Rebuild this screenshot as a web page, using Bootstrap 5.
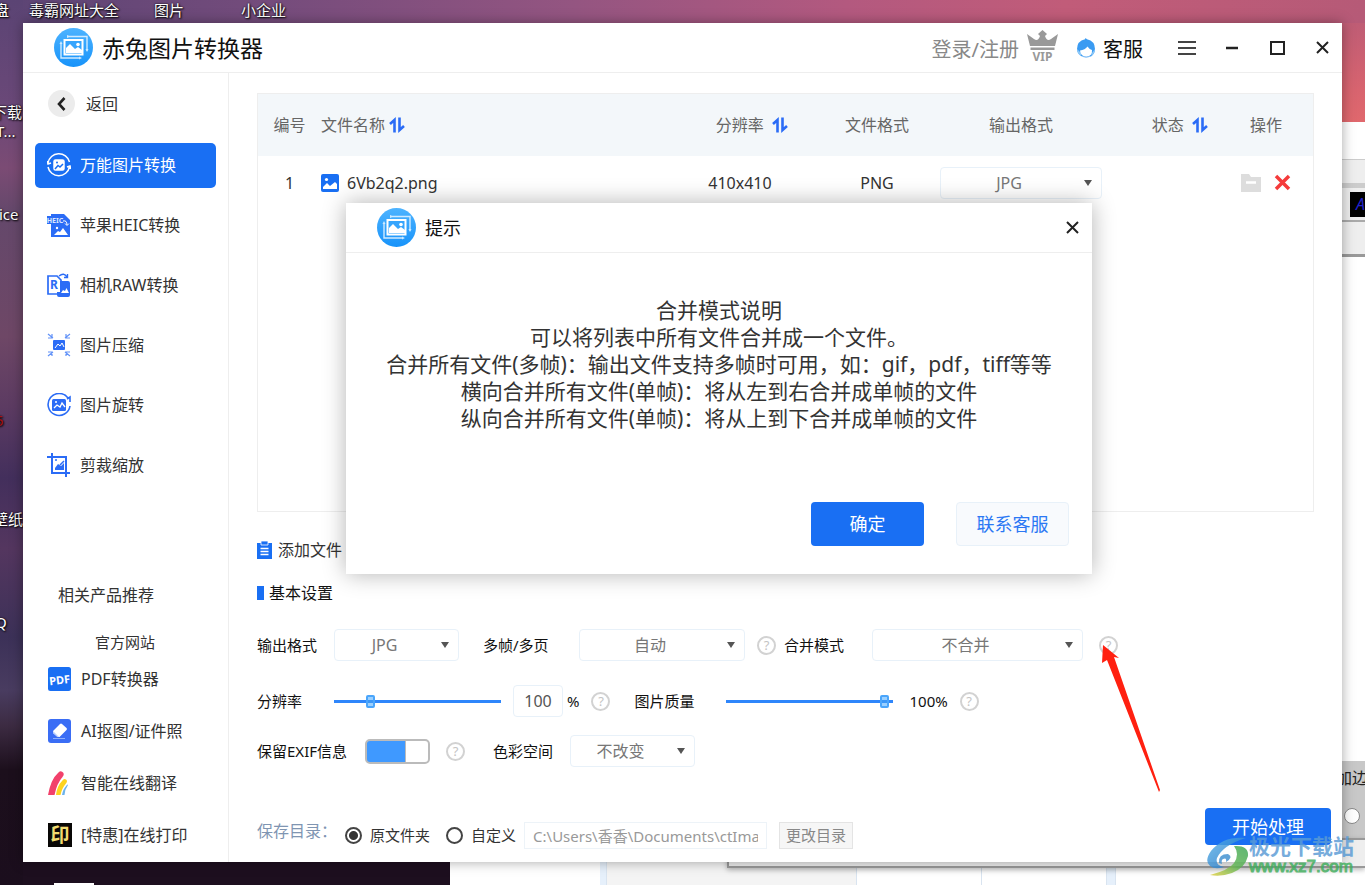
<!DOCTYPE html>
<html lang="zh-CN">
<head>
<meta charset="utf-8">
<meta name="viewport" content="width=device-width, initial-scale=1">
<title>赤兔图片转换器</title>
<link rel="stylesheet" href="https://cdn.jsdelivr.net/npm/bootstrap@5.3.0/dist/css/bootstrap.min.css">
<style>
:root{--blue:#196ff3;--line:#eee;--field:#e8f1f9}
body{font-family:"Noto Sans","Noto Sans CJK SC",sans-serif;font-size:16px;line-height:24px;color:#333;background:#1d0f1f}
button{font-family:inherit}
svg{display:block;flex:none}
a{color:inherit;text-decoration:none}

/* wallpaper */
.desktop{padding:23px;background:
  linear-gradient(180deg,#5b4474 0,#6a4878 12%,#7b4b74 19%,#64486b 24%,#6e4766 38%,#5c3b62 46%,#432f5c 54%,#54365f 62%,#3c3158 72%,#493c60 78%,#3c2b42 82%,#1c0f1c 87%,#1b0e1d 100%) left top/23px 100% no-repeat,
  linear-gradient(90deg,#5b4474 0,#754c7c 20%,#945581 42%,#b3597f 62%,#c15c79 78%,#b65a77 100%) left top/100% 23px no-repeat,
  linear-gradient(180deg,#b65a77 0,#d8646f 90px,#e0686d 122px) right top/23px 130px no-repeat,
  #1d0f1f}
.desk-label{position:absolute;color:#fff;font-size:15px;line-height:20px;white-space:nowrap;text-shadow:1px 1px 2px #000,0 0 2px #000}
.task-mark{position:absolute;left:54px;bottom:0;width:40px;height:2px;background:#fff}
.back-win{position:absolute;top:122px;left:450px;right:0;bottom:0;background:#fff}
.back-tools{position:absolute;top:37px;right:0;width:30px}
.back-tools .bar{height:25px;background:#eee;border-top:1px solid #ccc;border-bottom:1px solid #ccc}
.back-tools .keys{height:38px;background:#eee;border-top:4px solid #ccc;border-bottom:2px solid #aaa;color:#22c;padding-left:15px}
.back-tools .keys span{width:16px;height:25px;margin-top:4px;background:#000;font-size:16px;font-style:italic;padding-left:6px}
.back-tools .low{height:35px;background:#eee;border-bottom:3px solid #999}
.back-opts{position:absolute;top:639px;right:0;width:23px;height:78px;background:#c8c8c8;overflow:hidden;color:#222}
.back-opts div{margin-left:-6px;width:40px;padding-top:5px}
.back-opts input{appearance:none;width:16px;height:16px;border-radius:50%;border:1px solid #888;background:#fff;margin:18px 0 0 2px}
.back-foot{position:absolute;left:150px;right:0;bottom:0;height:30px}
.back-foot>*{border-right:1px solid #d9e4f0}
.back-edge{position:absolute;left:277px;right:0;bottom:17px;height:30px;background:#eee;border:2px solid #999;border-right:0;box-shadow:0 2px 5px #0004}

/* application window */
.app{min-height:calc(100vh - 46px);background:#fff;box-shadow:0 0 12px rgba(0,0,0,.35)}
.app-bar{height:50px;border-bottom:1px solid var(--line);padding-left:31px}
.app-title{font-size:23px;line-height:30px;color:#111;margin-left:9px}
.account{font-size:20px}
.win-btn{width:40px;height:40px;border:0;background:none;padding:0;display:grid;place-items:center;color:#333}
.side{width:206px;border-right:1px solid var(--line);padding:17px 12px 15px}
.back-dot{width:27px;height:27px;border-radius:50%;background:#ececec;display:grid;place-items:center}
.side-nav .nav-link{height:45px;padding:0 12px 2px;border-radius:5px;color:#333;display:flex;align-items:center;gap:9px;white-space:nowrap}
.side-nav .nav-link.active{background:var(--blue);color:#fff}
.side-nav svg{color:#2b6cf6}.side-nav .active svg{color:#fff}
.promo a{display:flex;gap:9px;height:24px;align-items:center;white-space:nowrap}

.work{padding-top:20px;min-width:0}
.pad{margin-left:28px;margin-right:28px}
.files{border:1px solid var(--line);min-height:200px}
.files table{table-layout:fixed;margin:0;color:#333}
.files th{height:62px;font-weight:400;color:#666;padding:0;border:0;background:#f3f7fa;vertical-align:middle}
.files td{height:53px;padding:0;border:0;vertical-align:middle;background:none;box-shadow:none}
.files th svg{display:inline-block;vertical-align:-2px;color:#2b6cf6}
.files .end-col{text-align:right;padding-right:11px}
.pick{height:32px;border:1px solid var(--field);border-radius:4px;color:#777;font-size:16px;line-height:22px;padding:0 26px 0 2px;text-align:center;text-align-last:center;background:#fff url("data:image/svg+xml,%3Csvg xmlns='http://www.w3.org/2000/svg' viewBox='0 0 8 6'%3E%3Cpath d='M0 0h8L4 6z' fill='%23555'/%3E%3C/svg%3E") no-repeat right 9px center/8px 6px;appearance:none}
.w-s{width:125px}.w-m{width:166px}.w-l{width:211px}.w-row{width:162px}
.set-row{height:32px;font-size:15px;color:#111;white-space:nowrap}
.g-12{margin-left:12px}
.lb-a{width:77px}.lb-b{width:96px}.lb-c{width:88px}.lb-d{width:108px}
.ask{width:19px;height:19px;border:2px solid #d2d2d2;border-radius:50%;background:none;color:#c4c4c4;font-size:13px;line-height:15px;padding:0;text-align:center;flex:none}
.slide{appearance:none;width:167px;height:16px;background:linear-gradient(#2f86fb,#2f86fb) center/100% 3px no-repeat;margin:0}
.slide::-webkit-slider-thumb{appearance:none;width:9px;height:13px;border-radius:2px;border:2px solid #4aa5fb;background:linear-gradient(#9bd0ff 0 3px,#3b97f8 3px 6px,#9bd0ff 6px)}
.num{width:50px;height:32px;border:1px solid var(--field);border-radius:4px;text-align:center;color:#555;font-size:16px;padding:0}
.flip{appearance:none;width:65px;height:25px;border:2px solid #bbb;border-radius:5px;background:#fff;margin:0}
.flip:checked{background:linear-gradient(90deg,#3f99ff 0 38px,#bbb 38px 39px,#fff 39px)}
.tick-bar{width:7px;height:14px;background:var(--blue)}
.save{height:54px;padding:0 11px 11px 28px;font-size:15px}
.save .dir{font-size:16px;color:#7f95b2}
.rad{appearance:none;width:17px;height:17px;border:2px solid #444;border-radius:50%;margin:0}
.rad:checked{background:radial-gradient(circle,#333 0 4px,#fff 5px)}
.path-in{width:243px;height:27px;border:1px solid #edf3f8;color:#999;font-size:15px;padding:0 8px}
.mini{height:27px;border:1px solid #e4e4e4;background:#f6f6f6;color:#888;font-size:15px;padding:0 6px;line-height:22px}
.go{width:126px;height:37px;background:var(--blue);color:#fff;font-size:18px;border:0;border-radius:4px;padding:0}

/* message dialog */
.tip-box{position:absolute;left:323px;top:180px;width:746px;height:371px;background:#fff;box-shadow:0 0 22px rgba(0,0,0,.3);z-index:5}
.tip-head{height:50px;border-bottom:1px solid var(--line);padding-left:31px}
.tip-head h2{font-size:18px;line-height:24px;font-weight:400;color:#111;margin:0 0 0 9px}
.tip-text{font-size:21px;line-height:27px;margin-top:44px}
.tip-foot{padding:0 23px 28px;gap:32px}
.tip-foot button{width:113px;height:44px;font-size:18px;border-radius:4px;padding:0}
.ok{background:var(--blue);color:#fff;border:0}
.help-btn{background:#f8fafd;color:#2b78f4;border:1px solid var(--field)}
.pointer{position:absolute;left:1101px;top:644px;z-index:6}
.stamp{position:absolute;right:11px;bottom:8px;z-index:7;opacity:.82}
.stamp b{display:block;font-size:21px;line-height:22px;color:#5a9bd5}
.stamp i{display:block;font:17px/20px "Liberation Sans",sans-serif;color:#3fae5c;-webkit-text-stroke:1px #3fae5c}
</style>
</head>
<body>
<svg width="0" height="0" class="position-absolute" aria-hidden="true">
  <defs>
    <linearGradient id="sky" x1="0" y1="0" x2="0" y2="1"><stop offset="0" stop-color="#4db3ff"/><stop offset="1" stop-color="#1793fa"/></linearGradient>
    <linearGradient id="swirlBlue" x1="0" y1="0" x2="1" y2="1"><stop offset="0" stop-color="#57b2e8"/><stop offset="1" stop-color="#2372c4"/></linearGradient>
    <linearGradient id="swirlGreen" x1="1" y1="0" x2="0" y2="1"><stop offset="0" stop-color="#3aa556"/><stop offset=".5" stop-color="#5fb552"/><stop offset="1" stop-color="#e3cf3c"/></linearGradient>
    <symbol id="logo" viewBox="0 0 39 39">
      <circle cx="19.500" cy="19.500" r="19.500" fill="url(#sky)"/>
      <path d="M13 8.500h20v14M7 15v15h19" fill="none" stroke="#cfeaff" stroke-width="1.400"/>
      <path d="M13 7l3 1.500-3 1.500zM33 24l-1.500-3h3zM7 13l-1.500 3h3zM28 30l-3-1.500v3z" fill="#cfeaff"/>
      <rect x="10.500" y="12" width="18" height="14.500" fill="#36a5fd" stroke="#fff" stroke-width="2"/>
      <path d="M12 25v-5l4-4 5 5 3-2 4 3v3z" fill="#fff"/><circle cx="24" cy="16.500" r="1.800" fill="#fff"/>
    </symbol>
    <symbol id="sort" viewBox="0 0 16 16"><path d="M5.500 15.500V3L1 7M10.500 .5V13L15 9" fill="none" stroke="currentColor" stroke-width="2.600"/></symbol>
    <symbol id="photo" viewBox="0 0 18 18"><rect width="18" height="18" rx="2" fill="#196ff3"/><circle cx="5.500" cy="5.500" r="1.600" fill="#fff"/><path d="M2 15v-2l4-4 3 3 5-4 2 2v5z" fill="#fff"/></symbol>
  </defs>
</svg>

<div class="desktop position-relative overflow-hidden min-vh-100">
  <div class="desk-label" style="left:-6px;top:0">盘</div>
  <div class="desk-label" style="left:29px;top:0">毒霸网址大全</div>
  <div class="desk-label" style="left:154px;top:0">图片</div>
  <div class="desk-label" style="left:241px;top:0">小企业</div>
  <div class="desk-label" style="left:-8px;top:102px">下载</div>
  <div class="desk-label" style="left:-4px;top:121px">T...</div>
  <div class="desk-label" style="left:-1px;top:204px">ice</div>
  <div class="desk-label" style="left:-5px;top:410px;color:#a11">5</div>
  <div class="desk-label" style="left:-7px;top:509px">壁纸</div>
  <div class="desk-label" style="left:-5px;top:612px">Q</div>
  <div class="task-mark"></div>

  <div class="back-win" aria-hidden="true">
    <div class="back-tools"><div class="bar"></div><div class="keys"><span class="d-block">A</span></div><div class="low"></div></div>
    <div class="back-opts"><div>加边</div><input type="radio" aria-label="边框"></div>
    <div class="back-foot d-flex">
      <div style="width:7px;background:#e6f0fb"></div><div style="width:250px;background:#f4f4f4"></div>
      <div style="width:125px"></div><div style="width:125px"></div><div style="width:9px;background:#e6f0fb"></div>
    </div>
    <div class="back-edge"></div>
  </div>

  <div class="app position-relative d-flex flex-column">
    <header class="app-bar d-flex align-items-center flex-shrink-0">
      <svg width="39" height="39"><use href="#logo"/></svg>
      <h1 class="app-title mb-0 fw-normal">赤兔图片转换器</h1>
      <div class="account d-flex align-items-center ms-auto pt-1">
        <a href="#" style="color:#888">登录/注册</a>
        <svg class="ms-2 mb-2" width="31" height="32" viewBox="0 0 31 32" fill="#999"><path d="M0 4l7 5q4 3 6-3l-2-2 4.500-4L20 4l-2 2q2 6 6 3l7-5-3 12H3zM3.500 17.500h24v2.500h-24z"/><text x="15.500" y="31" font-size="12" font-weight="700" text-anchor="middle">VIP</text></svg>
        <svg class="mb-1" style="margin-left:19px" width="18" height="20" viewBox="0 0 18 20"><path d="M8.500 0l1.500 1.200Q18 3 18 11q0 5-4 7.500H5Q0 16 0 11 0 3 8 1.200z" fill="#3a9bf2"/><path d="M4 18q-4-2-4-7l4 4zM14 18q4-2 4-7l-3 4z" fill="#8cc8f8"/><path d="M3 12.500q5-.5 7.500-4 2 3 4.500 3.500.5 6-5.500 6.500-6 0-6.500-6z" fill="#fff"/><path d="M6 18.500q3 1.500 6.500 0" fill="none" stroke="#79b9f5"/></svg>
        <a href="#" class="ms-2" style="color:#111">客服</a>
      </div>
      <div class="d-flex ms-4" style="gap:5px">
        <button class="win-btn" aria-label="菜单"><svg width="18" height="16" viewBox="0 0 18 16"><path d="M0 2h18M0 8h18M0 14h18" stroke="#444" stroke-width="2"/></svg></button>
        <button class="win-btn" aria-label="最小化"><svg width="12" height="4"><path d="M0 2h12" stroke="#222" stroke-width="2.500"/></svg></button>
        <button class="win-btn" aria-label="最大化"><svg width="15" height="14"><path d="M1 1h13v12H1z" fill="none" stroke="#222" stroke-width="2"/></svg></button>
        <button class="win-btn" aria-label="关闭"><svg width="13" height="13"><path d="M1 1l11 11M12 1L1 12" stroke="#222" stroke-width="2"/></svg></button>
      </div>
    </header>

    <div class="d-flex flex-grow-1">
      <nav class="side d-flex flex-column flex-shrink-0">
        <a href="#" class="d-flex align-items-center ps-3" style="gap:11px;margin:0 0 26px -3px">
          <span class="back-dot"><svg width="9" height="14" viewBox="0 0 9 14"><path d="M7.500 1L2 7l5.500 6" fill="none" stroke="#222" stroke-width="2.600"/></svg></span>返回</a>
        <div class="side-nav nav flex-column" style="gap:15px">
          <a class="nav-link active" href="#"><svg width="24" height="24" viewBox="0 0 24 24" fill="none" stroke="currentColor" stroke-width="1.500"><path d="M1 10A11 11 0 0 1 22.500 9M1 14a11 11 0 0 0 21.500 0M0 8l1 3 3-1M24 16l-1-3-3 1"/><rect x="7" y="7" width="10" height="10" rx="1.500" fill="currentColor"/><path d="M8 16l3-3.500 2 1.500 3-3" stroke="#196ff3"/><circle cx="10" cy="9.500" r="1" fill="#196ff3" stroke="none"/></svg>万能图片转换</a>
          <a class="nav-link" href="#"><svg width="24" height="24" viewBox="0 0 24 24"><path d="M4 1h13l6 6v17H4V12z" fill="currentColor"/><rect x="0" y="3" width="16" height="8" fill="currentColor"/><text x="8" y="10" font-size="7" font-weight="700" fill="#dbe7ff" text-anchor="middle">HEIC</text><path d="M16 8q4-1 4 4m-2-1.500l2 2 2-2" stroke="#fff" fill="none"/><path d="M7 22l4-4 2 1 3-4 5 7z" fill="#fff"/><circle cx="10" cy="15" r="1.200" fill="#fff"/></svg>苹果HEIC转换</a>
          <a class="nav-link" href="#"><svg width="24" height="24" viewBox="0 0 24 24"><path d="M10 21H1V3h9l4 4v4" fill="none" stroke="currentColor" stroke-width="1.700"/><path d="M13 8h8q2 0 2 2v12q0 2-2 2H12q-2 0-2-2v-3h3z" fill="currentColor"/><text x="3" y="16" font-size="12" font-weight="700" fill="currentColor">R</text><path d="M12 3q5-4 8 1m-3 .5h3.500V1" fill="none" stroke="currentColor" stroke-width="1.400"/><path d="M14 20l2-3 2 1 1.500-3 2.500 5z" fill="#fff"/></svg>相机RAW转换</a>
          <a class="nav-link" href="#"><svg width="24" height="24" viewBox="0 0 24 24"><rect x="6" y="7" width="12" height="10" rx="1" fill="currentColor"/><path d="M8 15l3-4 2 2 2-3 2 4" stroke="#fff" fill="none"/><path d="M1 1l5 4M1 5h4V1M23 1l-5 4M23 5h-4V1M1 23l5-4M1 19h4v4M23 23l-5-4M23 19h-4v4" stroke="currentColor" fill="none" stroke-width="1.200" opacity=".75"/></svg>图片压缩</a>
          <a class="nav-link" href="#"><svg width="24" height="24" viewBox="0 0 24 24"><path d="M21 5A11 11 0 1 0 23 13M23 9V4l-3 2" fill="none" stroke="currentColor" stroke-width="1.600"/><rect x="5" y="6" width="14" height="12" rx="1.500" fill="currentColor"/><path d="M7 15l3-3 3 2 2-4 3 4" stroke="#fff" fill="none" stroke-width="1.300"/><circle cx="9" cy="9" r="1" fill="#fff"/></svg>图片旋转</a>
          <a class="nav-link" href="#"><svg width="24" height="24" viewBox="0 0 24 24" fill="none" stroke="currentColor" stroke-width="2"><path d="M5 0v20h18M0 4h19v20"/><path d="M8 17v-2l3-4 3 2 3-3v7z" fill="currentColor" stroke="none"/><path d="M8 7h2M13 12l4-4" stroke-width="1.500"/></svg>剪裁缩放</a>
        </div>
        <div class="promo mt-auto">
          <div style="padding-left:23px;margin-bottom:23px">相关产品推荐</div>
          <div class="mb-3" style="padding-left:60px;font-size:15px"><a class="d-block" href="#">官方网站</a></div>
          <div class="d-flex flex-column" style="gap:28px;padding-left:13px;margin-top:-3px">
            <a href="#"><svg width="24" height="24" viewBox="0 0 24 24"><rect width="23" height="24" rx="2.500" fill="#196ff3"/><text x="11.500" y="17" font-size="11" font-weight="700" fill="#fff" text-anchor="middle" transform="rotate(-7 12 12)">PDF</text></svg>PDF转换器</a>
            <a href="#"><svg width="24" height="24" viewBox="0 0 24 24"><rect width="23" height="24" rx="3" fill="#3a6df5"/><path d="M5 12l7-7q1-1 2 0l4.500 4q1 1 0 2l-7 7h-2l-4.500-4z" fill="#fff"/><path d="M5 12l6 6H9.500L5 14z" fill="#b8cdfc"/><path d="M5 19.500h12" stroke="#8fb0fb"/></svg>AI抠图/证件照</a>
            <a href="#"><svg width="24" height="24" viewBox="0 0 24 24" fill="none"><path d="M0 24Q3 8 10 2q2-3 4.500-1 2.500 2 0 5Q9 12 6.500 24z" fill="#f2416b"/><path d="M8 24q1-9 6-14 2-3 4-1.500t0 4Q14 17 12.500 24z" fill="#fdd31f"/><path d="M14 24q1-6 4.500-9.500 1-1.500 1.500-.5Q17 18 16.500 24z" fill="#6cb3ea"/></svg>智能在线翻译</a>
            <a href="#"><svg width="24" height="24" viewBox="0 0 24 24"><rect width="24" height="24" fill="#090806"/><text x="12" y="19" font-size="19" font-weight="700" fill="#f2dc70" text-anchor="middle">印</text></svg>[特惠]在线打印</a>
          </div>
        </div>
      </nav>

      <main class="work flex-grow-1 d-flex flex-column">
        <section class="files pad flex-grow-1">
          <table class="table text-center">
            <colgroup><col style="width:63px"><col><col style="width:152px"><col style="width:122px"><col style="width:166px"><col style="width:115px"><col style="width:94px"></colgroup>
            <thead><tr>
              <th>编号</th>
              <th class="text-start">文件名称 <svg width="16" height="16"><use href="#sort"/></svg></th>
              <th class="ps-4">分辨率&nbsp; <svg width="16" height="16"><use href="#sort"/></svg></th>
              <th>文件格式</th><th>输出格式</th>
              <th class="end-col">状态&nbsp; <svg width="16" height="16"><use href="#sort"/></svg></th>
              <th>操作</th>
            </tr></thead>
            <tbody><tr>
              <td>1</td>
              <td><div class="d-flex align-items-center gap-2"><svg width="18" height="18"><use href="#photo"/></svg>6Vb2q2.png</div></td>
              <td>410x410</td><td>PNG</td>
              <td><select class="pick w-row" aria-label="文件输出格式"><option>JPG</option></select></td>
              <td></td>
              <td><div class="d-flex align-items-center justify-content-center" style="gap:13px">
                <button class="border-0 bg-transparent p-0" aria-label="打开目录"><svg width="20" height="18" viewBox="0 0 20 18"><path d="M0 0h8l2 3h10v15H0z" fill="#ddd"/><path d="M5 8.500h10" stroke="#fff" stroke-width="2.500"/></svg></button>
                <button class="border-0 bg-transparent p-0" aria-label="移除"><svg width="17" height="17"><path d="M2 2l13 13M15 2L2 15" stroke="#f53b3b" stroke-width="3.500"/></svg></button>
              </div></td>
            </tr></tbody>
          </table>
        </section>

        <div class="pad d-flex align-items-center" style="margin-top:26px;gap:6px">
          <svg width="15" height="18" viewBox="0 0 15 18"><path d="M0 2h15v16H0z" fill="#196ff3"/><path d="M4 0h7v4H4z" fill="#196ff3" stroke="#fff" stroke-width=".8"/><path d="M3.500 7.500h8M3.500 10.500h8M3.500 13.500h8" stroke="#fff" stroke-width="1.300"/></svg>
          <a href="#">添加文件</a>
        </div>
        <h2 class="pad d-flex align-items-center mb-4 fs-6 fw-normal" style="margin-top:19px;gap:5px;line-height:24px;color:#111"><span class="tick-bar"></span>基本设置</h2>

        <div class="set-row pad d-flex align-items-center">
          <label class="lb-a" for="fmt">输出格式</label><select class="pick w-s" id="fmt"><option>JPG</option></select>
          <label class="lb-b ms-4" for="frames">多帧/多页</label><select class="pick w-m" id="frames"><option>自动</option></select>
          <button class="ask g-12" aria-label="多帧说明">?</button>
          <label class="lb-c ms-2" for="merge">合并模式</label><select class="pick w-l" id="merge"><option>不合并</option></select>
          <button class="ask ms-3" aria-label="合并模式说明">?</button>
        </div>
        <div class="set-row pad d-flex align-items-center mt-4">
          <label class="lb-a" for="res">分辨率</label><input class="slide" id="res" type="range" min="0" max="100" value="20">
          <input class="num g-12" type="text" value="100" aria-label="分辨率百分比"><span class="ms-1">%</span>
          <button class="ask g-12" aria-label="分辨率说明">?</button>
          <label class="lb-b ms-4" for="quality" style="margin-right:-4px">图片质量</label><input class="slide" id="quality" type="range" min="0" max="100" value="97">
          <output class="ms-3" for="quality">100%</output>
          <button class="ask g-12" aria-label="图片质量说明">?</button>
        </div>
        <div class="set-row pad d-flex align-items-center" style="margin-top:18px">
          <label class="lb-d" for="exif">保留EXIF信息</label><input class="flip" id="exif" type="checkbox" role="switch" checked>
          <button class="ask ms-3" aria-label="EXIF说明">?</button>
          <label class="lb-a" for="space" style="margin-left:28px">色彩空间</label><select class="pick w-s" id="space"><option>不改变</option></select>
        </div>

        <div class="save d-flex align-items-end" style="margin-top:41px">
          <div class="d-flex align-items-center">
            <span class="dir mb-2">保存目录：</span>
            <input class="rad ms-2" type="radio" name="dir" id="dir1" checked><label class="ms-2" for="dir1">原文件夹</label>
            <input class="rad ms-3" type="radio" name="dir" id="dir2"><label class="ms-2" for="dir2">自定义</label>
            <input class="path-in ms-2" type="text" value="C:\Users\香香\Documents\ctImage" aria-label="保存路径">
            <button class="mini g-12">更改目录</button>
          </div>
          <button class="go ms-auto align-self-start">开始处理</button>
        </div>
      </main>
    </div>

    <section class="tip-box d-flex flex-column" role="dialog" aria-labelledby="tipTitle">
      <div class="tip-head d-flex align-items-center flex-shrink-0">
        <svg width="39" height="39"><use href="#logo"/></svg><h2 id="tipTitle">提示</h2>
        <button class="win-btn ms-auto" aria-label="关闭提示"><svg width="13" height="13"><path d="M1 1l11 11M12 1L1 12" stroke="#222" stroke-width="2"/></svg></button>
      </div>
      <p class="tip-text text-center text-nowrap mb-0">合并模式说明<br>可以将列表中所有文件合并成一个文件。<br>合并所有文件(多帧)：输出文件支持多帧时可用，如：gif，pdf，tiff等等<br>横向合并所有文件(单帧)：将从左到右合并成单帧的文件<br>纵向合并所有文件(单帧)：将从上到下合并成单帧的文件</p>
      <div class="tip-foot d-flex justify-content-end mt-auto"><button class="ok">确定</button><button class="help-btn">联系客服</button></div>
    </section>
  </div>

  <svg class="pointer" width="60" height="150" viewBox="1101 644 60 150"><path d="M1103 645l16 13-5-1 46 133-1 2-52-132-5 3z" fill="#ff2010"/></svg>
  <div class="stamp d-flex align-items-end">
    <svg width="42" height="40" viewBox="0 0 42 40"><path d="M39 1Q16-1 4 14-3 24 3 29q5 4 14 1-9-2-7-9Q16 8 39 1z" fill="url(#swirlBlue)"/><path d="M12 26q-1-9 9-9 6 3-2 8 1-5-3-3-2 1-1 5z" fill="#3f8fd0"/><path d="M27 9q15-1 14 10-3 12-16 17-11 4-22 2 19-5 24-12 6-9 0-17z" fill="url(#swirlGreen)"/></svg>
    <div><b>极光下载站</b><i>www.xz7.com</i></div>
  </div>
</div>
<script src="https://cdn.jsdelivr.net/npm/bootstrap@5.3.0/dist/js/bootstrap.bundle.min.js"></script>
</body>
</html>
